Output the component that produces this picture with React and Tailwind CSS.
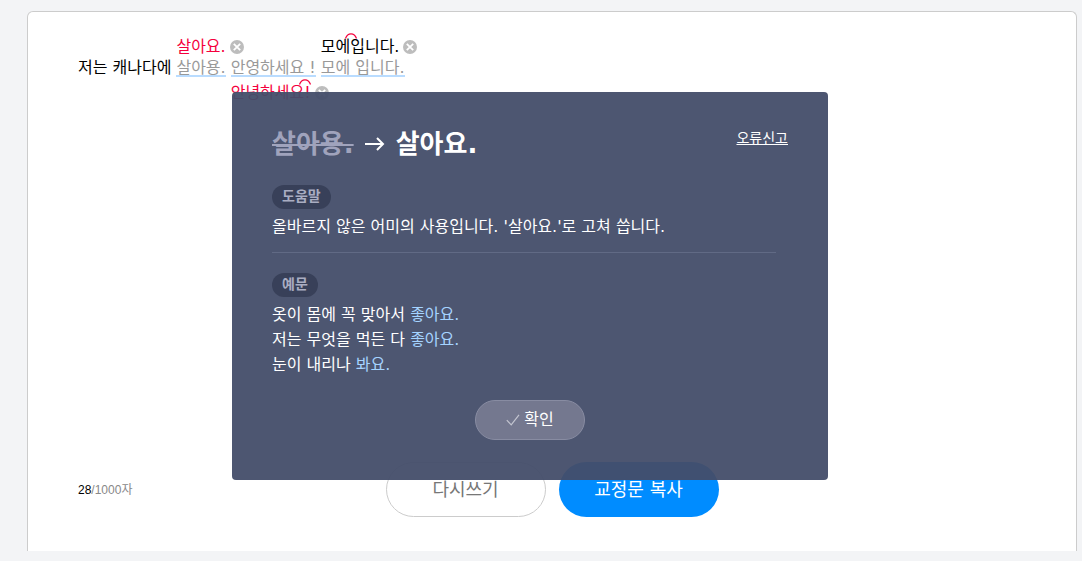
import React from "react";

const examples = [
  { text: "옷이 몸에 꼭 맞아서", answer: "좋아요." },
  { text: "저는 무엇을 먹든 다", answer: "좋아요." },
  { text: "눈이 내리나", answer: "봐요." },
];

const RemoveButton = () => (
  <button type="button" aria-label="교정 취소" className="shrink-0">
    <svg width="14" height="14" viewBox="0 0 14 14">
      <circle cx="7" cy="7" r="7" fill="#bdbdbd" />
      <path d="M3.8 3.8l6.4 6.4M10.2 3.8l-6.4 6.4" stroke="#fff" strokeWidth="1.8" />
    </svg>
  </button>
);

const JoinMark = ({ className }) => (
  <svg className={`absolute ${className}`} width="12" height="6" viewBox="0 0 12 6" fill="none">
    <path d="M0.5 5.5C1.5 2.5 3.5 0.8 6 0.8s4.5 1.7 5.5 4.7" stroke="#f5003d" strokeWidth="1.2" />
  </svg>
);

const Word = ({ original, fixed, below, color, mark }) => (
  <span className="relative h-5 whitespace-nowrap border-b-2 border-[#b9dcff] leading-[22px] text-[#999]">
    {original}
    <span
      className={`absolute left-0 flex items-center gap-1 leading-5 ${
        below ? "top-full mt-2" : "bottom-full"
      } ${color}`}
    >
      <span className="relative">
        {fixed}
        {mark && <JoinMark className={mark} />}
      </span>
      <RemoveButton />
    </span>
  </span>
);

const Tag = ({ children }) => (
  <h3 className="inline-block h-6 rounded-full bg-[#384059] px-2.5 align-top text-sm leading-[22px] font-bold text-[#a9adc2]">
    {children}
  </h3>
);

const HelpLayer = () => (
  <section
    role="dialog"
    aria-label="맞춤법 도움말"
    className="absolute top-20 left-51 w-[596px] rounded-sm bg-[#434d69]/95 px-10 pt-9 pb-10 text-white"
  >
    <div className="flex items-start justify-between">
      <h2 className="flex items-center gap-[11px] text-[26px] leading-8 font-bold">
        <del className="text-[#a0a3bc]">살아용.</del>
        <svg width="20" height="14" viewBox="0 0 20 14" fill="none" stroke="#fff" strokeWidth="2">
          <path d="M0 7h18M12 1l6 6-6 6" />
        </svg>
        <span>살아요.</span>
      </h2>
      <a href="#report" className="text-sm leading-5 underline">
        오류신고
      </a>
    </div>

    <div className="mr-3 mt-[25px] border-b border-[#616a85] pb-[13px]">
      <Tag>도움말</Tag>
      <p className="mt-[5px] leading-[25px]">
        올바르지 않은 어미의 사용입니다. '살아요.'로 고쳐 씁니다.
      </p>
    </div>

    <div className="mt-5">
      <Tag>예문</Tag>
      <ul className="mt-[5px] leading-[25px]">
        {examples.map((item) => (
          <li key={item.text}>
            {item.text} <span className="text-[#a5d3ff]">{item.answer}</span>
          </li>
        ))}
      </ul>
    </div>

    <button
      type="button"
      className="mx-auto mt-[23px] flex h-10 w-[110px] items-center justify-center gap-1 rounded-full border border-[#888ca2] bg-[#74788f]"
    >
      <svg width="14" height="12" viewBox="0 0 14 12" fill="none" stroke="#c3c5d0" strokeWidth="1.2">
        <path d="M0.8 6.2l4.4 4.6L13 0.8" />
      </svg>
      확인
    </button>
  </section>
);

const App = () => {
  return (
    <div className="min-h-screen bg-[#f3f4f6] pt-[11px] pr-[5px] pb-2.5 pl-[27px] font-['DejaVu_Sans','Noto_Sans_CJK_KR',sans-serif] text-base">
      <main className="relative rounded-t-md border border-b-0 border-[#ccc] bg-white px-[50px] pt-[45px] pb-[34px]">
        <p className="flex min-h-[405px] items-start gap-[5px]">
          <span className="whitespace-nowrap leading-[22px] text-black">저는 캐나다에</span>
          <Word original="살아용." fixed="살아요." color="text-[#f5003d]" />
          <Word
            original="안영하세요 !"
            fixed="안녕하세요!"
            color="text-[#f5003d]"
            mark="-top-1 right-0"
            below
          />
          <Word original="모에 입니다." fixed="모에입니다." color="text-black" mark="-top-1 left-6" />
        </p>

        <div className="flex items-center">
          <div className="flex-1 font-['Liberation_Sans','Noto_Sans_CJK_KR',sans-serif] text-xs text-[#888]">
            <span className="text-black">28</span>/1000자
          </div>
          <div className="flex gap-[13px] text-lg">
            <button type="button" className="h-[55px] w-40 rounded-full border border-[#ccc] text-[#777]">
              다시쓰기
            </button>
            <button type="button" className="h-[55px] w-40 rounded-full bg-[#008cff] text-white">
              교정문 복사
            </button>
          </div>
          <div className="flex-1" />
        </div>

        <HelpLayer />
      </main>
    </div>
  );
};

export default App;
